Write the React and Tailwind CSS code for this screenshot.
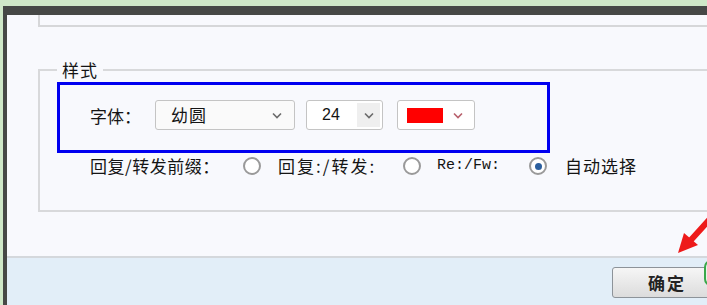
import React from "react";

const Chevron = ({ color = "#6b6b6b" }) => (
  <svg width="10" height="7" viewBox="0 0 10 7" fill="none">
    <path d="M1 1.5 L5 5.5 L9 1.5" stroke={color} strokeWidth="1.6" />
  </svg>
);

const Radio = ({ checked }) => (
  <span className="flex h-[18px] w-[18px] shrink-0 items-center justify-center rounded-full border-2 border-[#9a9a9a] bg-white">
    {checked && <span className="h-[7px] w-[7px] rounded-full bg-[#2c5f9e]" />}
  </span>
);

export default function App() {
  return (
    <div
      className="relative h-[305px] w-[707px] overflow-hidden bg-[#cfe8c8] pl-[3px] pt-[6px] text-[#141414]"
      style={{ fontFamily: '"Noto Sans CJK SC", "Noto Sans", sans-serif' }}
    >
      <div className="h-full bg-[#464846] pl-[4px] pt-[9px]">
        <div className="flex h-full flex-col bg-[#f8f9fd]">
          {/* remnant of previous fieldset */}
          <div className="ml-[31px] mr-[-10px] h-[12px] border-b-2 border-l-2 border-[#d6d7d9]" />

          {/* 样式 fieldset */}
          <fieldset className="ml-[31px] mr-[-20px] mt-[34px] h-[151px] border-2 border-[#d8d9db] pl-[17px] pt-[3px]">
            <legend className="px-[5px] text-[17px] leading-[18px] tracking-[1px]">样式</legend>
            <div className="flex h-[71px] w-[493px] items-center border-[3px] border-[#0000f0] pl-[30px]">
              <span className="mt-[-3px] w-[65px] shrink-0 text-[17px]">字体：</span>
              <div className="mt-[-5px] flex h-[30px] w-[140px] items-center justify-between rounded-[3px] border border-[#c4c4c4] bg-[#fafafa] pl-[15px] pr-[12px]">
                <span className="text-[17px] tracking-[1px]">幼圆</span>
                <Chevron />
              </div>
              <div className="ml-[11px] mt-[-5px] flex h-[30px] w-[77px] items-center justify-between rounded-[3px] border border-[#c4c4c4] bg-white pl-[15px]">
                <span className="text-[16px]" style={{ fontFamily: '"Liberation Sans", sans-serif' }}>24</span>
                <span className="mr-[2px] flex h-[24px] w-[23px] items-center justify-center bg-[#efefef]">
                  <Chevron />
                </span>
              </div>
              <div className="ml-[14px] mt-[-5px] flex h-[30px] w-[78px] items-center rounded-[3px] border border-[#c4c4c4] bg-white pl-[9px]">
                <span className="h-[15px] w-[36px] bg-[#ff0000]" />
                <span className="ml-[10px]">
                  <Chevron color="#b8606c" />
                </span>
              </div>
            </div>
            <div className="flex h-[26px] items-center pl-[33px] text-[17px]">
              <span className="w-[153px] shrink-0 tracking-[0.5px]">回复/转发前缀：</span>
              <Radio />
              <span className="ml-[17px] w-[125px] shrink-0 tracking-[2px]">回复:/转发:</span>
              <Radio />
              <span className="ml-[16px] w-[92px] shrink-0 text-[15px]" style={{ fontFamily: '"Liberation Mono", monospace' }}>Re:/Fw:</span>
              <Radio checked />
              <span className="ml-[18px] tracking-[1px]">自动选择</span>
            </div>
          </fieldset>

          <div className="flex-1" />

          {/* bottom bar */}
          <div className="h-[49px] border-t-2 border-[#d4d8dc] bg-[#e2eef8] pt-[9px]">
            <div className="ml-[605px] flex h-[31px] w-[110px] items-center rounded-[3px] border border-[#8d9399] bg-gradient-to-b from-[#f6f6f6] to-[#dcdcdc] pl-[35px] text-[17px] font-bold tracking-[2px] text-[#222]">
              确定
            </div>
          </div>
        </div>
      </div>

      {/* red arrow annotation */}
      <svg className="absolute left-[670px] top-[215px]" width="37" height="45" viewBox="0 0 37 45">
        <path d="M40 4 L20 26" stroke="#ee1a1a" strokeWidth="6" strokeLinecap="round" />
        <path d="M8 38 L14 18 L28 30 Z" fill="#ee1a1a" />
      </svg>
      {/* green edge */}
      <div className="absolute left-[704px] top-[260px] h-[26px] w-[14px] rounded-full border-2 border-[#3aa84a] bg-[#e8f5e8]" />
    </div>
  );
}
